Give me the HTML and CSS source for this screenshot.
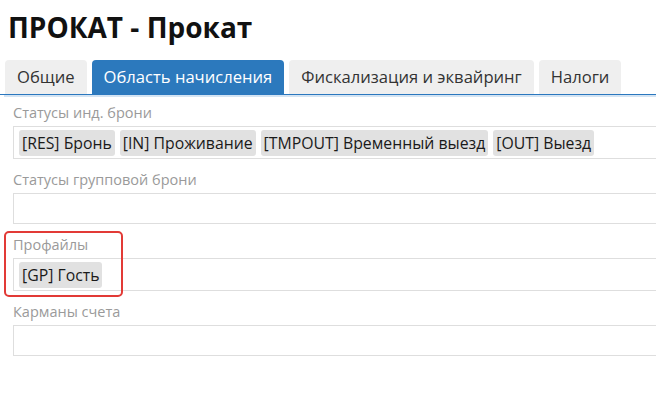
FILE: index.html
```html
<!DOCTYPE html>
<html lang="ru">
<head>
<meta charset="utf-8">
<link rel="stylesheet" href="styles.css">
</head>
<body>
<h1 class="title">ПРОКАТ - Прокат</h1>
<div class="tabs">
  <div class="tab">Общие</div>
  <div class="tab active">Область начисления</div>
  <div class="tab">Фискализация и эквайринг</div>
  <div class="tab">Налоги</div>
</div>
<div class="panel">
  <div class="field">
    <div class="label">Статусы инд. брони</div>
    <div class="box">
      <span class="tag">[RES] Бронь</span>
      <span class="tag">[IN] Проживание</span>
      <span class="tag">[TMPOUT] Временный выезд</span>
      <span class="tag">[OUT] Выезд</span>
    </div>
  </div>
  <div class="field">
    <div class="label">Статусы групповой брони</div>
    <div class="box empty"></div>
  </div>
  <div class="field">
    <div class="label">Профайлы</div>
    <div class="box">
      <span class="tag">[GP] Гость</span>
    </div>
    <div class="highlight"></div>
  </div>
  <div class="field">
    <div class="label">Карманы счета</div>
    <div class="box empty"></div>
  </div>
</div>
</body>
</html>
```
FILE: styles.css
```css
html, body {
  margin: 0;
  padding: 0;
  background: #fff;
  overflow: hidden;
}
body {
  font-family: "Open Sans", "Noto Sans", sans-serif;
  color: #222;
  width: 656px;
}
.title {
  margin: 0;
  padding: 7px 0 0 8px;
  height: 53px;
  box-sizing: border-box;
  font-size: 28px;
  font-weight: 700;
  color: #111;
  line-height: 40px;
}
.tabs {
  display: flex;
  gap: 5px;
  padding-left: 5px;
  margin-top: 7px;
  border-bottom: 1px solid #2b78bf;
}
.tab {
  height: 34px;
  line-height: 34px;
  padding: 0 12px;
  background: #efefef;
  border-radius: 4px 4px 0 0;
  font-size: 16.6px;
  color: #333;
}
.tab.active {
  background: #2c79bd;
  color: #fff;
}
.panel {
  margin-left: 4px;
  border-top: 2px solid #d4e4f3;
  padding: 6px 0 0 9px;
}
.field {
  position: relative;
  margin-bottom: 11px;
}
.label {
  font-size: 14.5px;
  color: #9a9a9a;
  height: 20px;
  line-height: 20px;
  margin-bottom: 3px;
}
.box {
  display: flex;
  gap: 5px;
  align-items: center;
  height: 31px;
  border: 1px solid #dedede;
  border-right: none;
  padding-left: 5px;
}
.box.empty {
  height: 29px;
}
.tag {
  background: #e1e1e1;
  border-radius: 3px;
  height: 26px;
  line-height: 26px;
  padding: 0 3px;
  font-size: 15.8px;
  color: #1a1a1a;
}
.highlight {
  position: absolute;
  left: -9px;
  top: -4px;
  width: 115px;
  height: 62px;
  border: 2px solid #e23a36;
  border-radius: 5px;
}
```
